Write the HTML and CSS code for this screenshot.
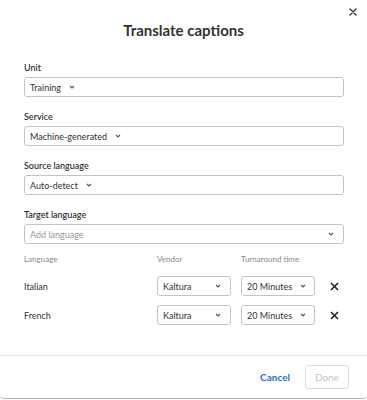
FILE: index.html
```html
<!doctype html>
<html lang="en">
<head>
  <meta charset="UTF-8" />
  <meta name="viewport" content="width=device-width, initial-scale=1.0" />
  <title>Translate captions</title>
  <link rel="stylesheet" href="styles.css">
</head>
<body>
  <div class="modal">
    <button class="close-btn" aria-label="Close">
      <svg width="8" height="8" viewBox="0 0 8 8"><path d="M1 1L7 7M7 1L1 7" stroke="#333" stroke-width="1.4" stroke-linecap="round"/></svg>
    </button>

    <h1 class="modal-title">Translate captions</h1>

    <div class="modal-content">
      <div class="field">
        <label>Unit</label>
        <div class="select">
          <span>Training</span>
          <svg class="chevron" width="6" height="4" viewBox="0 0 6 4"><path d="M1 1L3 3L5 1" fill="none" stroke="#555" stroke-width="1.1"/></svg>
        </div>
      </div>

      <div class="field">
        <label>Service</label>
        <div class="select">
          <span>Machine-generated</span>
          <svg class="chevron" width="6" height="4" viewBox="0 0 6 4"><path d="M1 1L3 3L5 1" fill="none" stroke="#555" stroke-width="1.1"/></svg>
        </div>
      </div>

      <div class="field">
        <label>Source language</label>
        <div class="select">
          <span>Auto-detect</span>
          <svg class="chevron" width="6" height="4" viewBox="0 0 6 4"><path d="M1 1L3 3L5 1" fill="none" stroke="#555" stroke-width="1.1"/></svg>
        </div>
      </div>

      <div class="field">
        <label>Target language</label>
        <div class="select select-spread">
          <span class="placeholder">Add language</span>
          <svg class="chevron" width="6" height="4" viewBox="0 0 6 4"><path d="M1 1L3 3L5 1" fill="none" stroke="#555" stroke-width="1.1"/></svg>
        </div>
      </div>

      <div class="lang-table">
        <div class="lang-row lang-head">
          <span>Language</span>
          <span>Vendor</span>
          <span>Turnaround time</span>
          <span></span>
        </div>

        <div class="lang-row">
          <span class="lang-name">Italian</span>
          <div class="select select-spread">
            <span>Kaltura</span>
            <svg class="chevron" width="6" height="4" viewBox="0 0 6 4"><path d="M1 1L3 3L5 1" fill="none" stroke="#555" stroke-width="1.1"/></svg>
          </div>
          <div class="select select-spread">
            <span>20 Minutes</span>
            <svg class="chevron" width="6" height="4" viewBox="0 0 6 4"><path d="M1 1L3 3L5 1" fill="none" stroke="#555" stroke-width="1.1"/></svg>
          </div>
          <button class="remove-btn" aria-label="Remove">
            <svg width="9" height="9" viewBox="0 0 9 9"><path d="M1 1L8 8M8 1L1 8" stroke="#222" stroke-width="1.6"/></svg>
          </button>
        </div>

        <div class="lang-row">
          <span class="lang-name">French</span>
          <div class="select select-spread">
            <span>Kaltura</span>
            <svg class="chevron" width="6" height="4" viewBox="0 0 6 4"><path d="M1 1L3 3L5 1" fill="none" stroke="#555" stroke-width="1.1"/></svg>
          </div>
          <div class="select select-spread">
            <span>20 Minutes</span>
            <svg class="chevron" width="6" height="4" viewBox="0 0 6 4"><path d="M1 1L3 3L5 1" fill="none" stroke="#555" stroke-width="1.1"/></svg>
          </div>
          <button class="remove-btn" aria-label="Remove">
            <svg width="9" height="9" viewBox="0 0 9 9"><path d="M1 1L8 8M8 1L1 8" stroke="#222" stroke-width="1.6"/></svg>
          </button>
        </div>
      </div>
    </div>

    <div class="modal-footer">
      <button class="cancel-btn">Cancel</button>
      <button class="done-btn" disabled>Done</button>
    </div>
  </div>
</body>
</html>
```

FILE: styles.css
```css
* {
  box-sizing: border-box;
  margin: 0;
  padding: 0;
}

body {
  font-family: Lato, 'Noto Sans', sans-serif;
  background: #fff;
  color: #333;
}

.modal {
  position: relative;
  width: 367px;
  height: 399px;
  display: flex;
  flex-direction: column;
  background: #fff;
  border-bottom: 1px solid #b5b5b5;
  border-radius: 0 0 4px 4px;
}

.close-btn {
  position: absolute;
  top: 8px;
  right: 10px;
  width: 8px;
  height: 8px;
  background: none;
  border: none;
  display: flex;
  cursor: pointer;
}

.modal-title {
  margin-top: 20px;
  font-size: 15px;
  line-height: 20px;
  font-weight: 700;
  text-align: center;
  color: #333;
}

.modal-content {
  flex: 1;
  padding: 22px 23px 0 24px;
}

.field {
  margin-bottom: 14px;
}

.field label {
  display: block;
  font-size: 9px;
  line-height: 12px;
  font-weight: 500;
  color: #222;
  margin-bottom: 3px;
}

.select {
  height: 20px;
  border: 1px solid #c4c4c4;
  border-radius: 3px;
  padding: 0 9px 0 5px;
  display: flex;
  align-items: center;
  gap: 8px;
  font-size: 9px;
  color: #333;
  background: #fff;
  white-space: nowrap;
}

.select-spread {
  justify-content: space-between;
}

.chevron {
  flex-shrink: 0;
}

.placeholder {
  color: #999;
}

.lang-table {
  margin-top: -5px;
  display: flex;
  flex-direction: column;
  gap: 9px;
}

.lang-row {
  display: grid;
  grid-template-columns: 123px 74px 74px 1fr;
  column-gap: 10px;
  align-items: center;
  font-size: 9px;
}

.lang-head {
  font-size: 8px;
  line-height: 12px;
  color: #888;
  margin-bottom: 2px;
}

.lang-name {
  color: #333;
}

.remove-btn {
  justify-self: center;
  background: none;
  border: none;
  display: flex;
  cursor: pointer;
}

.modal-footer {
  border-top: 1px solid #e6e6e6;
  padding: 9px 18px 9px 0;
  display: flex;
  justify-content: flex-end;
  align-items: center;
  gap: 15px;
}

.cancel-btn {
  background: none;
  border: none;
  font-family: inherit;
  font-size: 10px;
  font-weight: 700;
  color: #1f6fe0;
  cursor: pointer;
}

.done-btn {
  width: 44px;
  height: 24px;
  background: #fff;
  border: 1px solid #dcdcdc;
  border-radius: 3px;
  font-family: inherit;
  font-size: 10px;
  color: #c4c4c4;
}
```
